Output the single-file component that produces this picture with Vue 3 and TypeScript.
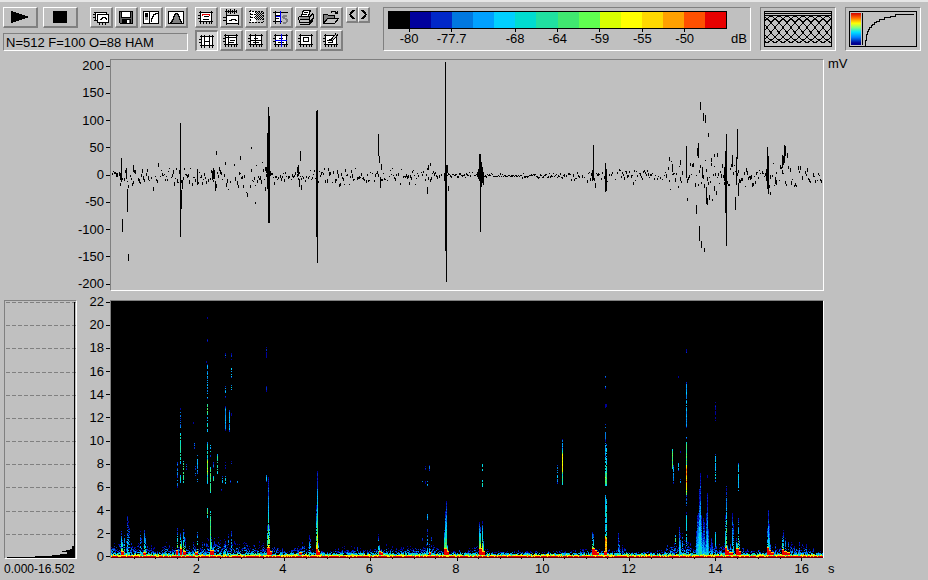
<script setup lang="ts">
type Segment = [x: number, top: number, bottom: number]
type Streak = [x: number, top: number, bottom: number, level: number, density: number]
type Plume = [x: number, height: number, level: number, density: number]

const palette = [
  '#000000', '#00009c', '#0028c8', '#0078e0', '#00a0ff', '#00d0ff', '#00dcd0', '#20e0a0',
  '#40e870', '#60ff50', '#d8ff00', '#ffff00', '#ffd800', '#ffa000', '#ff5000', '#e80000',
]

const scaleLabels = [
  { text: '-80', at: 1 }, { text: '-77.7', at: 3 }, { text: '-68', at: 6 }, { text: '-64', at: 8 },
  { text: '-59', at: 10 }, { text: '-55', at: 12 }, { text: '-50', at: 14 },
]

const voltTicks = [200, 150, 100, 50, 0, -50, -100, -150, -200]
const freqTicks = [22, 20, 18, 16, 14, 12, 10, 8, 6, 4, 2, 0]
const timeTicks = [2, 4, 6, 8, 10, 12, 14, 16]
const halfSeconds = Array.from({ length: 33 }, (_, i) => i + 1)

function makeRandom(seed: number) {
  let s = seed
  return () => {
    s = (s * 1664525 + 1013904223) >>> 0
    return s / 4294967296
  }
}

function interpolate(points: number[][], x: number) {
  for (let i = 1; i < points.length; i++) {
    if (x <= points[i][0]) {
      const [x0, y0] = points[i - 1]
      const [x1, y1] = points[i]
      return y0 + ((y1 - y0) * (x - x0)) / (x1 - x0)
    }
  }
  return points[points.length - 1][1]
}

/* ---- waveform, in a 712 x 230 box whose zero line is y = 115 ---- */
const spikes: Segment[] = [
  [10, 98, 121], [9, 113, 119], [11, 159, 171], [16, 129, 151], [17, 194, 200], [15, 108, 116], [22, 105, 111],
  [69, 63, 176], [70, 130, 148], [71, 120, 128], [86, 109, 124], [101, 112, 119], [102, 108, 118], [103, 110, 118], [104, 121, 130],
  [105, 91, 94], [129, 96, 99], [140, 87, 88], [144, 142, 143],
  [154, 107, 110], [155, 107, 112], [156, 73, 128], [157, 47, 162], [158, 56, 162], [159, 111, 115],
  [189, 91, 100], [187, 105, 115], [186, 107, 112], [188, 119, 126], [190, 125, 129], [205, 51, 176], [206, 50, 202],
  [267, 74, 95], [268, 96, 102], [270, 104, 109], [269, 117, 127], [316, 127, 133], [317, 105, 109], [319, 103, 105],
  [333, 114, 120], [334, 2, 190], [335, 105, 221], [336, 105, 112], [337, 126, 130],
  [366, 112, 116], [367, 109, 118], [368, 94, 120], [369, 94, 171], [370, 102, 126], [371, 107, 122], [372, 112, 124],
  [481, 110, 120], [482, 85, 119], [484, 123, 127], [494, 103, 131], [495, 109, 130],
  [561, 104, 111], [575, 86, 117], [558, 97, 100], [569, 100, 104], [576, 138, 140],
  [585, 145, 153], [586, 88, 95], [587, 83, 97], [588, 166, 180], [589, 42, 49], [590, 181, 187], [591, 107, 115],
  [592, 53, 60], [593, 188, 191], [594, 55, 62], [595, 127, 143], [596, 138, 144], [597, 73, 76], [598, 135, 139], [601, 139, 140],
  [600, 98, 101], [603, 94, 96], [606, 93, 96], [603, 126, 130],
  [613, 107, 120], [614, 91, 152], [615, 74, 185], [621, 95, 103], [625, 97, 124], [626, 69, 98], [627, 123, 135], [624, 137, 149],
  [655, 110, 120], [656, 87, 128], [657, 96, 133], [659, 132, 134], [664, 117, 123], [665, 120, 124],
  [671, 95, 107], [672, 96, 104], [673, 85, 102], [674, 86, 95], [676, 93, 97],
]

const noiseEnvelope = [
  [0, 11], [15, 13], [45, 12], [60, 8], [75, 14], [95, 8], [115, 13], [140, 20], [160, 7], [180, 6], [215, 9],
  [235, 10], [255, 7], [280, 7], [310, 9], [330, 4], [345, 1], [355, 4], [375, 2], [400, 2], [445, 2], [460, 7],
  [475, 6], [490, 9], [505, 7], [525, 8], [545, 4], [560, 14], [585, 16], [610, 14], [635, 11], [650, 7], [670, 16], [695, 14], [712, 5],
]

function waveformPath() {
  const random = makeRandom(77)
  let d = ''
  for (let x = 1; x < 711; x++) {
    const quiet = interpolate(noiseEnvelope, x)
    if (quiet > 3 && random() < 0.2) continue
    const spread = (random() + random() - 1) * quiet * 1.15
    const height = 1 + Math.floor(random() * Math.min(4, 1 + quiet / 4))
    d += `M${x} ${Math.round(115 + spread)}h1v${height}h-1z`
  }
  for (const [x, top, bottom] of spikes) d += `M${x} ${top}h1v${bottom - top + 1}h-1z`
  return d
}

/* ---- sonogram, in a 712 x 257 box whose 0 kHz line is at the bottom ---- */
const streaks: Streak[] = [
  [69, 107, 128, 3, 0.4], [69, 132, 162, 7, 0.85], [69, 174, 181, 6, 1], [66, 159, 186, 3, 0.5], [72, 160, 181, 8, 0.6], [75, 162, 168, 3, 0.6],
  [82, 119, 122, 3, 0.7], [83, 142, 147, 4, 0.6], [84, 165, 176, 3, 0.5], [86, 153, 172, 4, 0.8], [86, 175, 181, 5, 0.6],
  [96, 16, 17, 2, 1], [96, 37, 41, 2, 0.5], [95, 60, 61, 2, 1], [96, 62, 98, 4, 0.6], [96, 103, 113, 9, 0.9], [96, 116, 130, 6, 0.7], [96, 141, 157, 6, 0.8],
  [96, 158, 173, 10, 1], [96, 174, 182, 6, 0.8], [96, 206, 216, 8, 0.7], [99, 141, 155, 5, 0.5], [99, 166, 191, 8, 0.8], [99, 210, 250, 8, 0.95],
  [102, 161, 167, 3, 0.8], [102, 175, 182, 7, 0.7], [106, 153, 172, 7, 0.8], [111, 175, 182, 5, 0.5], [110, 188, 189, 4, 1],
  [114, 52, 56, 3, 0.7], [114, 84, 96, 4, 0.6], [114, 105, 129, 4, 0.95], [114, 161, 167, 3, 0.5], [114, 174, 182, 6, 0.5],
  [118, 109, 130, 4, 0.9], [120, 52, 58, 3, 0.8], [120, 65, 77, 5, 0.5], [120, 84, 89, 5, 0.7], [120, 112, 114, 3, 1], [120, 160, 167, 3, 0.5], [119, 179, 181, 4, 1], [126, 180, 181, 6, 1],
  [155, 46, 56, 2, 0.8], [155, 84, 90, 3, 0.6], [155, 174, 181, 5, 0.9],
  [314, 165, 168, 3, 0.8], [311, 180, 181, 5, 0.8], [314, 180, 182, 4, 1], [316, 180, 185, 5, 0.5], [318, 164, 169, 4, 0.9], [316, 213, 218, 5, 1], [311, 236, 239, 4, 0.8], [320, 236, 239, 4, 0.9],
  [371, 161, 171, 6, 0.6], [371, 179, 185, 8, 0.8],
  [446, 164, 182, 4, 0.8], [451, 138, 147, 4, 0.9], [451, 147, 151, 7, 1], [451, 151, 172, 11, 1], [451, 172, 183, 7, 1],
  [494, 75, 76, 4, 1], [494, 81, 87, 4, 0.5], [494, 103, 106, 2, 1], [495, 103, 105, 2, 1], [494, 123, 139, 3, 0.5], [494, 140, 155, 4, 0.7], [495, 143, 161, 5, 0.8],
  [494, 156, 172, 6, 0.8], [495, 161, 172, 7, 0.8], [494, 172, 184, 9, 1], [495, 170, 184, 8, 1], [494, 194, 236, 5, 0.85], [495, 198, 236, 6, 0.8], [494, 235, 253, 13, 1], [495, 236, 253, 12, 1],
  [561, 148, 167, 8, 1], [562, 164, 182, 4, 0.9], [567, 75, 76, 4, 1], [567, 160, 169, 5, 0.8], [569, 178, 182, 5, 0.8], [569, 148, 151, 3, 0.6], [564, 234, 242, 7, 0.7],
  [575, 48, 51, 4, 1], [575, 81, 126, 4, 0.95], [575, 136, 139, 5, 0.7], [575, 141, 164, 8, 1], [575, 164, 178, 13, 1], [575, 178, 182, 15, 1], [575, 182, 188, 13, 1],
  [575, 188, 193, 10, 1], [575, 194, 212, 3, 0.6], [575, 214, 240, 6, 0.9], [575, 240, 253, 5, 0.5],
  [604, 100, 120, 1, 0.5], [604, 152, 180, 5, 0.75], [604, 231, 245, 6, 1], [596, 174, 176, 2, 1], [627, 162, 189, 5, 0.85],
]

const plumes: Plume[] = [
  [10, 24, 11, 0.7], [11, 15, 12, 0.8], [13, 20, 9, 0.5], [16, 39, 6, 0.8], [17, 34, 5, 0.6], [18, 28, 6, 0.4], [29, 24, 6, 0.5], [30, 17, 5, 0.5], [33, 25, 9, 0.8], [34, 22, 8, 0.5],
  [66, 27, 12, 0.7], [69, 22, 15, 0.9], [70, 15, 15, 0.9], [72, 26, 12, 0.7], [73, 24, 9, 0.5], [74, 16, 7, 0.4], [84, 10, 6, 0.7], [86, 25, 11, 0.5],
  [99, 20, 13, 0.9], [100, 16, 11, 0.8], [102, 10, 9, 0.7], [107, 18, 6, 0.4], [113, 16, 6, 0.6], [114, 14, 7, 0.5], [117, 22, 6, 0.4], [120, 24, 6, 0.4],
  [156, 30, 12, 0.9], [157, 78, 11, 0.97], [158, 30, 15, 0.9], [198, 20, 7, 0.8], [199, 16, 7, 0.5], [205, 50, 11, 0.9], [206, 84, 12, 1], [207, 12, 14, 0.8],
  [267, 21, 8, 0.6], [268, 10, 12, 0.9], [270, 5, 12, 0.8], [316, 26, 6, 0.6], [318, 12, 7, 0.8], [333, 26, 12, 0.9], [334, 44, 11, 1], [335, 54, 10, 1], [336, 10, 15, 1],
  [368, 34, 12, 0.9], [369, 28, 15, 0.9], [371, 34, 12, 0.9], [372, 16, 10, 0.8], [481, 23, 13, 0.6], [482, 22, 11, 0.8],
  [507, 22, 4, 0.9], [508, 14, 4, 0.8], [511, 9, 4, 0.6], [568, 28, 6, 0.9], [569, 22, 6, 0.7], [573, 15, 6, 0.5], [571, 24, 5, 0.4],
  [585, 24, 5, 1], [586, 40, 5, 1], [587, 42, 6, 1], [588, 66, 7, 1], [589, 82, 7, 1], [590, 40, 6, 1], [591, 22, 4, 1], [592, 37, 5, 1], [593, 33, 4, 1], [594, 16, 4, 1], [595, 42, 5, 1], [596, 62, 6, 1], [597, 26, 4, 1], [600, 17, 4, 1], [601, 12, 4, 1],
  [614, 40, 8, 0.8], [615, 69, 11, 0.8], [616, 10, 15, 1], [619, 12, 7, 0.7], [621, 42, 6, 0.9], [622, 31, 6, 0.9], [625, 18, 11, 0.7], [626, 12, 14, 1], [627, 37, 11, 0.7], [628, 15, 11, 0.7],
  [656, 27, 7, 0.9], [657, 45, 8, 1], [658, 31, 6, 1], [659, 12, 6, 0.8], [664, 11, 4, 0.7], [671, 20, 13, 0.7], [672, 25, 7, 0.8], [674, 18, 6, 0.6], [677, 13, 5, 0.6], [680, 13, 4, 0.7], [688, 14, 4, 0.6], [692, 10, 3, 0.5], [695, 11, 3, 0.7],
]

/* Saturated patches at the foot of each event: x, width, height. */
const feet = [
  [10, 3, 3], [32, 3, 2], [65, 2, 4], [69, 2, 6], [72, 3, 3], [84, 3, 2], [99, 4, 4], [156, 3, 7], [159, 2, 3], [188, 3, 2], [205, 2, 6], [207, 2, 3],
  [268, 2, 3], [270, 2, 2], [318, 2, 2], [333, 3, 6], [336, 2, 3], [368, 3, 6], [371, 3, 3], [481, 3, 6], [484, 2, 4], [486, 2, 2], [493, 3, 3],
  [614, 2, 7], [616, 2, 4], [618, 4, 2], [625, 3, 6], [628, 2, 3], [656, 2, 7], [658, 2, 4], [660, 3, 2], [671, 2, 5], [673, 3, 3], [676, 3, 2],
]

const floorNoise = [
  [0, 9], [12, 14], [25, 8], [35, 11], [45, 5], [55, 10], [62, 5], [70, 14], [85, 9], [100, 14], [125, 10], [150, 10], [165, 7], [175, 4], [190, 10], [200, 5],
  [215, 3], [235, 8], [262, 4], [275, 9], [285, 5], [300, 9], [325, 7], [333, 3], [345, 5], [352, 3], [370, 9], [378, 3], [440, 3], [480, 5], [500, 4], [512, 8],
  [520, 3], [545, 3], [565, 12], [580, 12], [605, 9], [620, 8], [640, 4], [655, 4], [675, 8], [690, 8], [712, 3],
]

function sonogramPaths() {
  const random = makeRandom(4021)
  const paths = palette.map(() => '')
  const put = (x: number, y: number, level: number, w = 1, h = 1) => {
    const i = Math.max(1, Math.min(15, Math.round(level)))
    paths[i] += `M${x} ${y}h${w}v${h}h${-w}z`
  }
  for (let x = 0; x < 712; x++) {
    const reach = interpolate(floorNoise, x) * (0.5 + random() * 0.9)
    for (let k = 0; k < reach; k++) {
      const near = 1 - k / reach
      if (random() < 0.25 + near * 0.45) put(x, 253 - k, 1 + near * 4.5 * random() + (k < 2 ? 2 : 0))
    }
  }
  for (const [x, height, level, density] of plumes) {
    for (let k = 0; k < height; k++) {
      if (random() < density) put(x, 253 - k, 1 + (level - 1) * Math.pow(1 - k / height, 1.15) + (random() - 0.5) * 2)
    }
  }
  for (const [x, top, bottom, level, density] of streaks) {
    for (let y = top; y <= bottom; y++) {
      if (random() < density) {
        const edge = Math.min(y - top, bottom - y) < 2 ? 2 : 0
        put(x, y, level - edge + (random() - 0.6) * 2.4)
      }
    }
  }
  for (const [x, w, h] of feet) {
    put(x, 253 - h, 12, w)
    put(x, 254 - h, 15, w, h)
  }
  for (let x = 0; x < 712; x++) {
    if (random() < 0.5) put(x, 253, 4 + random() * 8)
    put(x, 254, random() < 0.75 ? 10 + random() * 2 : 7)
    put(x, 255, random() < 0.78 ? 15 : 12)
  }
  return paths
}

function windowCurves() {
  let d = ''
  for (let start = -64; start < 68; start += 8) {
    for (let i = 0; i <= 34; i++) {
      const value = 0.54 - 0.46 * Math.cos((Math.PI * 2 * i) / 34)
      d += `${i ? 'L' : 'M'}${start + i * 2} ${(33 - value * 30).toFixed(1)}`
    }
  }
  return d
}

const waveform = waveformPath()
const sonogram = sonogramPaths()
const overlapCurves = windowCurves()

interface Tool { label: string; art: string; pressed?: boolean }

const frame = '<path class="w" d="M3 3h12v10H3z"/><path class="k" d="M3.5 2v13M14.5 2v13M2 3.5h14M2 12.5h14M6.5 13v2M9.5 13v2M12.5 13v2M1 6.5h2M1 9.5h2"/>'

const fileTools: Tool[] = [
  { label: 'Copy', art: '<path class="w" d="M3 3h11v8H3z"/><path class="k" d="M2 3.5h13M2 11.5h3M3.5 3v9M14.5 3v3M1 5.5h2M1 8.5h2"/><path class="w" d="M5 6h11v7H5z"/><path class="k" d="M5 5.5h12M5 13.5h12M5.5 5v9M16.5 5v9M7.5 14v2M10.5 14v2M13.5 14v2M8 10.5h1v-1h1v-1h3v1h1v1"/>' },
  { label: 'Save', art: '<path fill="#606060" d="M2 2h14v13H3l-1-1z"/><path class="w" d="M5 2h8v6H5z"/><path class="k" d="M2.5 2v12M3 14.5h13M15.5 2v13M2 2.5h14M4.5 3v5.5h9V3M5 10.5h8v4H5z"/><path fill="#000" d="M5 10h5v5H5z"/><path class="w" d="M10 11h2v3h-2z"/>' },
  { label: 'Transfer curve', art: '<path class="w" d="M1 2h15v13H1z"/><path class="k" d="M1.5 2.5h15v12h-15z"/><path fill="#000" d="M3 4h3v4H3z"/><path fill="#909090" d="M3 8h3v3H3z"/><path class="k" d="M7.5 3v11M9.5 13v-4h1v-2h1v-2h2v-1h2"/>' },
  { label: 'Window function', art: '<path class="w" d="M1 2h16v13H1z"/><path fill="#808080" d="M3 14l3-5 2-5h2l2 5 3 5z"/><path class="k" d="M1.5 2.5h15v12h-15zM3 13.5h1v-1h1v-2h1v-3h1v-2h1v-1h2v1h1v2h1v3h1v2h1v1"/>' },
]

const viewTools: Tool[] = [
  { label: 'Red trace', art: frame + '<path class="k" d="M7 7.500h5M6 10.500h6"/><path d="M5.500 7v-1.500h7v1.500" stroke="#e00000" fill="none"/>' },
  { label: 'Oscillogram', art: '<path class="k" d="M3 2.5h12M4.5 0v5M6.5 1v3M8.5 0v5M10.5 1v3M12.5 0v5M14.5 1v3"/><path class="w" d="M5 7h11v8H5z"/><path class="k" d="M4 6.5h13M4 14.5h13M4.5 5v11M16.5 6v10M1 8.5h3M1 11.5h3M7 11.5h2v-1h4v1h2"/>' },
  { label: 'Selection', art: '<path class="w" d="M3 2h6v11H3z"/><path class="k" d="M2 2.5h14M3.5 1v13M2 13.5h14M4 5.5h4M4 8.5h4M16.5 3v10" stroke-dasharray="2 1"/><path class="k" d="M8 3.500h7M9 4.500h7M8 5.500h7M9 6.500h7M8 7.500h7M9 8.500h7M8 9.500h7M9 10.500h7" stroke-dasharray="1 1"/>' },
  { label: 'Spectrum slice', art: '<path class="w" d="M3 3h6v10H3z"/><path class="k" d="M1 3.5h15M1 12.5h9M3.5 2v13M8.5 2v13M4 6.5h4M4 9.5h3"/><path d="M8.5 2v12M4 7.5h5" stroke="#0000ff"/><path d="M15 6.5h-3l-1 1v1l4 2v2l-1 1h-3" stroke="#808080" stroke-width="2" fill="none"/>' },
  { label: 'Print', art: '<path class="w" d="M6 1h7l-2 6H4z"/><path d="M6.5 1h7l-2 6M6.5 1l-2 6M7 3.5h4M6 5.5h4M2 7.5h11l3-3M1.5 8l1 5h10V8M12.5 13l4-4V5M3 15.5h9l4-4M3 10.5h9" stroke="#000" fill="none"/><path fill="#909090" d="M3 8h9v2H3z"/>' },
  { label: 'Open', art: '<path fill="#808080" d="M2 6h4l1 1h5v3H6l-4 4z"/><path d="M1.5 14V5.5h4l1 1h6v3M1.5 14.5l4-5h11l-4 5zM9 3.5l1-1h3l2 2M15.5 1.5v3h-3" stroke="#000" fill="none"/>' },
]

const layoutTools: Tool[] = [
  { label: 'Column cursors', pressed: true, art: '<path class="w" d="M3 3h12v10H3z"/><path class="k" d="M3.5 2v13M6.5 2v13M11.5 2v13M14.5 2v13M2 3.5h14M2 12.5h14M1 6.5h2M1 9.5h2M7 8.5h4"/>' },
  { label: 'Row cursors', art: frame + '<path class="k" d="M6.5 3v9M4 5.5h11M8 8.5h5M7 10.5h5"/>' },
  { label: 'Cross cursor', art: frame + '<path class="k" d="M8.5 2v11M4 8.5h11M7 6.5h4M6 10.5h6"/>' },
  { label: 'Blue cross cursor', art: frame + '<path class="k" d="M7 6.5h4M6 10.5h6"/><path d="M9.5 2v13M3 8.5h12" stroke="#0000ff"/>' },
  { label: 'Box cursor', art: frame + '<path class="k" d="M6.5 5.5h5v4h-5z"/>' },
  { label: 'Edit', art: frame + '<path class="k" d="M5 8.5h2v-1h2M6 10.5h5"/><path d="M9 9l6-7" stroke="#000" stroke-width="3"/><path d="M10 8l5-6" stroke="#c0c0c0"/>' },
]
</script>

<template>
  <div class="page">
    <header class="toolbar">
      <div class="controls">
        <div class="buttons">
          <div class="group">
            <button class="tool wide" aria-label="Play">
              <svg width="20" height="14" viewBox="0 0 20 14"><path d="M1 1l19 6-19 6z" /></svg>
            </button>
            <button class="tool wide" aria-label="Stop">
              <svg width="20" height="14" viewBox="0 0 20 14"><path d="M3 1h14v12H3z" /></svg>
            </button>
          </div>
          <div class="strip">
            <button v-for="t in fileTools" :key="t.label" class="tool" :aria-label="t.label">
              <svg class="icon" viewBox="0 0 18 16" v-html="t.art"></svg>
            </button>
          </div>
        </div>
        <output class="status">N=512 F=100 O=88 HAM</output>
      </div>

      <div class="matrix">
        <button v-for="t in viewTools" :key="t.label" class="tool" :aria-label="t.label">
          <svg class="icon" viewBox="0 0 18 16" v-html="t.art"></svg>
        </button>
        <button
          v-for="t in layoutTools"
          :key="t.label"
          class="tool"
          :class="{ pressed: t.pressed }"
          :aria-label="t.label"
          :aria-pressed="t.pressed ? 'true' : 'false'"
        >
          <svg class="icon" viewBox="0 0 18 16" v-html="t.art"></svg>
        </button>
      </div>

      <div class="steps">
        <button class="tool step" aria-label="Previous">
          <svg width="8" height="11" viewBox="0 0 8 11"><path d="M6 1L2 5.500l4 4.500" /></svg>
        </button>
        <button class="tool step" aria-label="Next">
          <svg width="8" height="11" viewBox="0 0 8 11"><path d="M2 1l4 4.500L2 10" /></svg>
        </button>
      </div>

      <section class="well scale" aria-label="Level scale">
        <div class="bar">
          <div class="swatches">
            <span v-for="c in palette" :key="c" :style="{ background: c }"></span>
          </div>
          <div class="levels">
            <span v-for="l in scaleLabels" :key="l.text" :style="{ gridColumn: `${l.at} / span 2` }">{{ l.text }}</span>
          </div>
        </div>
        <span class="unit">dB</span>
      </section>

      <div class="well preview">
        <svg class="overlap" viewBox="0 0 66 34" aria-label="Window overlap">
          <path :d="overlapCurves" />
          <path d="M0 1.500h66" />
        </svg>
      </div>

      <div class="well preview">
        <div class="transfer">
          <div class="rainbow"></div>
          <svg viewBox="0 0 52 33" aria-label="Transfer curve">
            <path d="M1.500 33v-6h1v-6h1v-3h1v-2h1v-2h2v-2h1v-1h2v-2h2v-1h3v-2h5v-2h6v-1h5v-2h19" />
          </svg>
        </div>
      </div>
    </header>

    <main class="charts">
      <ul class="axis volts">
        <li v-for="v in voltTicks" :key="v">{{ v }}</li>
      </ul>
      <div class="plot wave">
        <svg viewBox="0 0 712 230" preserveAspectRatio="none" role="img" aria-label="Waveform">
          <path :d="waveform" />
        </svg>
      </div>
      <span class="volt-unit">mV</span>

      <div class="plot mean">
        <svg viewBox="0 0 71 257" preserveAspectRatio="none" role="img" aria-label="Mean spectrum">
          <path
            v-for="f in freqTicks.slice(0, -1)"
            :key="f"
            class="guide"
            :d="`M1 ${Math.round(256 - f * 11.59) + 0.5}h70`"
          />
          <path d="M69 1h1v256H2v-1h28v-1h17v-1h8v-1h7v-2h-5v-1h4v-1h4v-1h2v-3h2z" />
        </svg>
      </div>
      <ul class="axis freqs">
        <li v-for="f in freqTicks" :key="f">{{ f }}</li>
      </ul>
      <div class="plot sono">
        <svg viewBox="0 0 712 257" preserveAspectRatio="none" role="img" aria-label="Sonogram">
          <path v-for="(d, i) in sonogram" :key="i" :d="d" :fill="palette[i]" />
          <path d="M0 256h712v1H0z" fill="#600000" />
        </svg>
      </div>

      <span class="range">0.000-16.502</span>
      <div class="time">
        <svg viewBox="0 0 712 4" preserveAspectRatio="none">
          <path
            v-for="n in halfSeconds"
            :key="n"
            :d="`M${Math.round(1 + n * 21.54)} 0h1v${n % 4 ? 1 : 3}h-1z`"
          />
        </svg>
        <div class="seconds">
          <span v-for="t in timeTicks" :key="t">{{ t }}</span>
        </div>
      </div>
      <span class="time-unit">s</span>
    </main>
  </div>
</template>

<style>
body {
  background: #c0c0c0;
}
</style>

<style scoped>
.page {
  box-sizing: border-box;
  display: flex;
  flex-direction: column;
  min-height: 100vh;
  overflow: hidden;
  background: #c0c0c0;
  color: #000;
  font: 13px/14px "Liberation Sans", Arial, sans-serif;
}

svg {
  display: block;
  shape-rendering: crispEdges;
}

.toolbar {
  display: flex;
  align-items: stretch;
  padding: 5px 7px 0 3px;
  border-top: 2px solid #e6e6e6;
}

.controls {
  display: flex;
  flex-direction: column;
  justify-content: space-between;
  width: 185px;
}

.buttons,
.group,
.strip,
.steps {
  display: flex;
}

.buttons {
  justify-content: space-between;
}

.group {
  gap: 5px;
}

.strip {
  gap: 2px;
}

.tool {
  display: flex;
  align-items: center;
  justify-content: center;
  box-sizing: border-box;
  width: 23px;
  height: 21px;
  padding: 0;
  border: solid;
  border-width: 1px 2px 2px 1px;
  border-color: #fff #808080 #808080 #fff;
  background: #c0c0c0;
}

.wide {
  width: 35px;
}

.pressed {
  border-width: 2px 1px 1px 2px;
  border-color: #808080 #fff #fff #808080;
  background: #d4d4d4;
}

.icon {
  width: 18px;
  height: 16px;
}

.icon :deep(.k) {
  fill: none;
  stroke: #000;
}

.icon :deep(.w) {
  fill: #fff;
}

.status {
  box-sizing: border-box;
  height: 18px;
  padding-left: 2px;
  border: 1px solid;
  border-color: #808080 #fff #fff #808080;
  line-height: 17px;
  white-space: nowrap;
}

.matrix {
  display: grid;
  grid-template-columns: repeat(6, 23px);
  gap: 2px;
  margin-left: 7px;
}

.steps {
  align-items: flex-start;
  margin: 0 14px 0 3px;
}

.step {
  width: 12px;
  height: 16px;
}

.step path {
  fill: none;
  stroke: #000;
  stroke-width: 2;
}

.well {
  box-sizing: border-box;
  height: 44px;
  border: 1px solid;
  border-color: #808080 #fff #fff #808080;
}

.scale {
  display: flex;
  flex: 1;
  gap: 4px;
  margin-left: -1px;
  padding: 3px 3px 0 4px;
}

.bar {
  flex: 1;
}

.swatches,
.levels {
  display: grid;
  grid-template-columns: repeat(16, 1fr);
}

.swatches {
  height: 16px;
  border: 1px solid #000;
}

.levels span {
  text-align: center;
}

.levels span::before {
  content: "";
  display: block;
  width: 1px;
  height: 3px;
  margin: 0 auto;
  background: #000;
}

.unit {
  margin-top: 21px;
}

.preview {
  width: 76px;
  margin-left: 9px;
  padding: 3px;
}

.overlap {
  box-sizing: border-box;
  width: 100%;
  height: 36px;
  border: 1px solid #000;
}

.overlap path,
.transfer path {
  fill: none;
  stroke: #000;
}

.transfer {
  box-sizing: border-box;
  display: flex;
  height: 36px;
  padding: 1px 0 0 1px;
  border: 1px solid #000;
}

.rainbow {
  width: 10px;
  height: 32px;
  padding-right: 1px;
  border-right: 1px solid #000;
  background: linear-gradient(#d00000, #ff6000 14%, #ffff00 32%, #80ff80 46%, #00e0ff 60%, #0080ff 76%, #000090 94%) content-box;
}

.transfer svg {
  flex: 1;
  height: 33px;
}

.charts {
  display: grid;
  flex: 1;
  grid-template-columns: 73px 33px minmax(0, 1fr) 104px;
  grid-template-rows: minmax(0, 232fr) 9px minmax(0, 258fr) 22px;
  padding: 8px 0 0 4px;
}

.plot {
  box-sizing: border-box;
  min-height: 0;
  border: 1px solid;
  border-color: #808080 #fff #fff #808080;
}

.plot svg {
  width: 100%;
  height: 100%;
}

.wave {
  grid-area: 1 / 3;
}

.volt-unit {
  grid-area: 1 / 4;
  margin-top: -2px;
  padding-left: 4px;
}

.mean {
  grid-area: 3 / 1;
  margin-bottom: -1px;
}

.guide {
  fill: none;
  stroke: #808080;
  stroke-dasharray: 4 2;
}

.sono {
  grid-area: 3 / 3;
  border-bottom: 0;
  background: #000;
}

.axis {
  display: flex;
  flex-direction: column;
  justify-content: space-between;
  margin: 0;
  padding: 0;
  list-style: none;
}

.axis li {
  display: flex;
  align-items: center;
  justify-content: flex-end;
  gap: 2px;
  height: 14px;
}

.axis li::after {
  content: "";
  width: 4px;
  height: 1px;
  background: #000;
}

.volts {
  grid-area: 1 / 2;
}

.freqs {
  grid-area: 3 / 2;
  margin: -5px 0 -6px;
}

.range {
  grid-area: 4 / 1;
  margin-top: 4px;
  font-size: 12px;
  white-space: nowrap;
}

.time {
  grid-area: 4 / 3;
  padding: 0 1px;
}

.time svg {
  width: 100%;
  height: 4px;
}

.seconds {
  display: grid;
  grid-template-columns: repeat(8, 1fr);
  margin: 0 -22px 0 42px;
  text-align: center;
}

.time-unit {
  grid-area: 4 / 4;
  padding: 4px 0 0 4px;
}
</style>
